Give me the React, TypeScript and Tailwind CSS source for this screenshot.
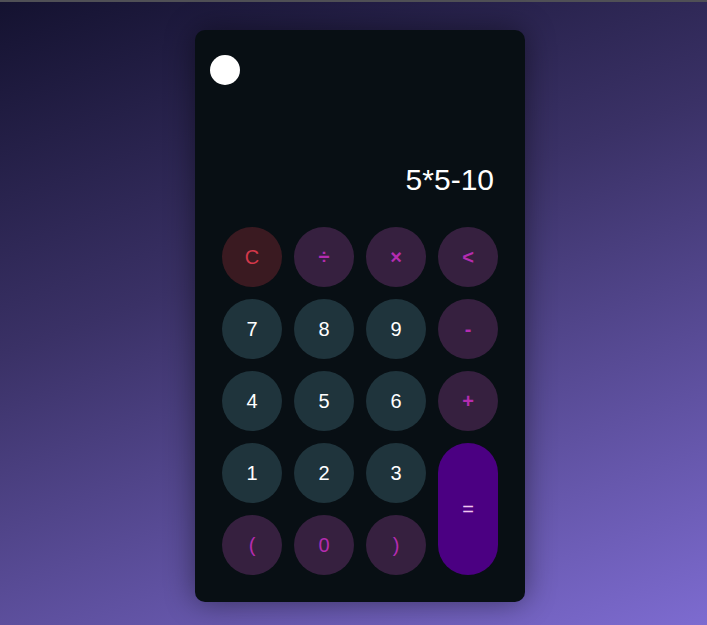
import React from "react";

type Btn = { label: string; kind: "clear" | "op" | "num" | "paren" };

const rows: Btn[][] = [
  [
    { label: "C", kind: "clear" },
    { label: "÷", kind: "op" },
    { label: "×", kind: "op" },
    { label: "<", kind: "op" },
  ],
  [
    { label: "7", kind: "num" },
    { label: "8", kind: "num" },
    { label: "9", kind: "num" },
    { label: "-", kind: "op" },
  ],
  [
    { label: "4", kind: "num" },
    { label: "5", kind: "num" },
    { label: "6", kind: "num" },
    { label: "+", kind: "op" },
  ],
];

function cls(kind: Btn["kind"]) {
  if (kind === "clear") return "bg-[#3a1a21] text-[#d4384a]";
  if (kind === "num") return "bg-[#1f343c] text-white";
  if (kind === "op") return "bg-[#36203f] text-[#b52cb0] font-bold text-[17px]";
  return "bg-[#36203f] text-[#b52cb0]";
}

function Key({ b }: { b: Btn }) {
  return (
    <div
      className={`w-[60px] h-[60px] rounded-full flex items-center justify-center text-[20px] ${cls(b.kind)}`}
    >
      {b.label}
    </div>
  );
}

export default function App() {
  return (
    <div
      className="w-[707px] h-[625px] border-t-2 border-[#505056] bg-[linear-gradient(160deg,#141230_0%,#3a3166_40%,#7d6bd0_100%)] flex justify-start pl-[195px] pt-[28px]"
      style={{ fontFamily: '"Liberation Sans", Arial, sans-serif' }}
    >
      <div className="w-[330px] h-[572px] rounded-[10px] bg-[#080f14] shadow-[0_0_30px_rgba(0,0,0,0.45)] flex flex-col px-[27px] pt-[25px]">
        <div className="w-[30px] h-[30px] rounded-full bg-white -ml-[12px]" />
        <div className="mt-[74px] h-[40px] flex justify-end items-center text-white text-[30px] pr-[4px]">
          5*5-10
        </div>
        <div className="mt-[28px] grid grid-cols-4 gap-[12px]">
          {rows.flat().map((b, i) => (
            <Key key={i} b={b} />
          ))}
          <Key b={{ label: "1", kind: "num" }} />
          <Key b={{ label: "2", kind: "num" }} />
          <Key b={{ label: "3", kind: "num" }} />
          <div className="row-span-2 w-[60px] rounded-full bg-[#4b0082] text-[#f0c8f0] flex items-center justify-center text-[20px]">
            =
          </div>
          <Key b={{ label: "(", kind: "paren" }} />
          <Key b={{ label: "0", kind: "paren" }} />
          <Key b={{ label: ")", kind: "paren" }} />
        </div>
      </div>
    </div>
  );
}
